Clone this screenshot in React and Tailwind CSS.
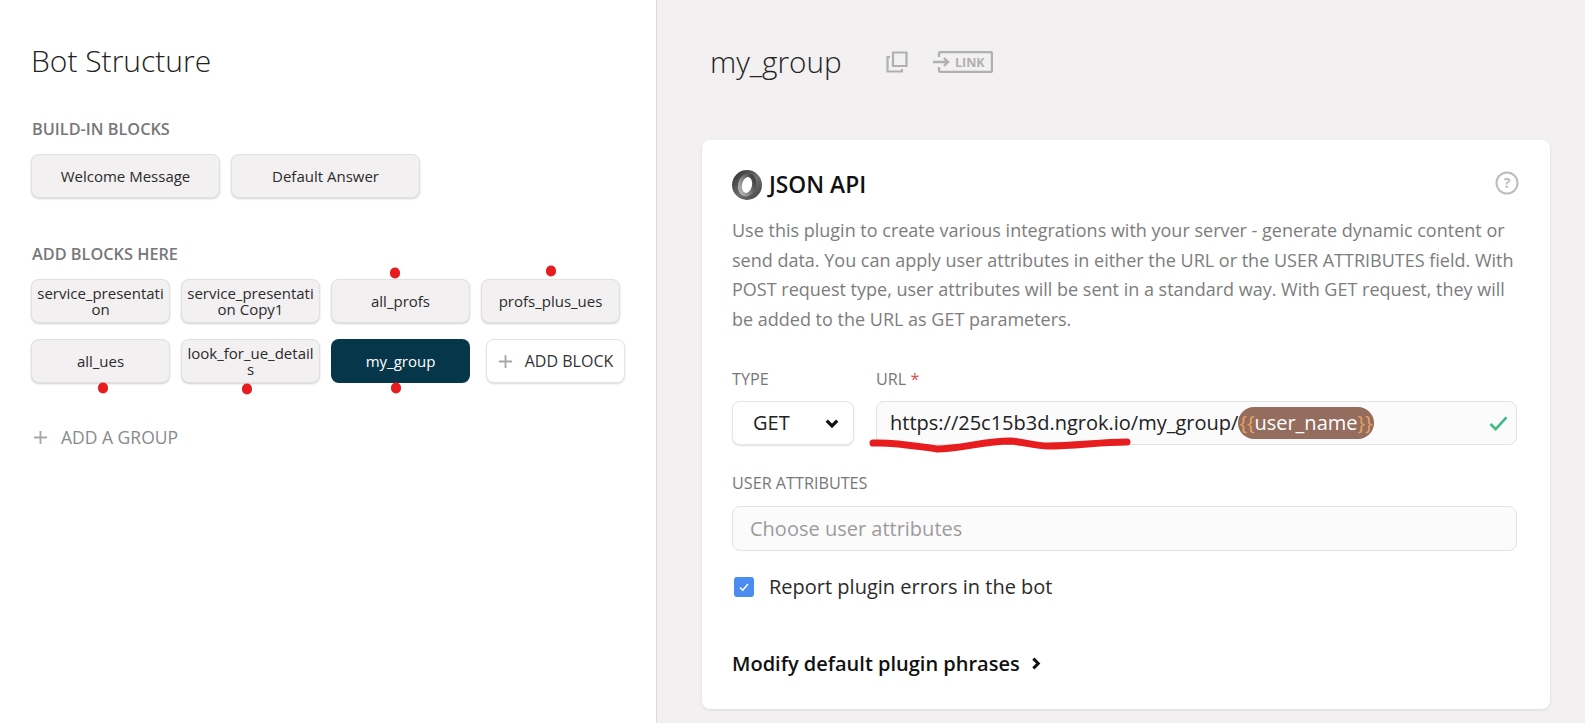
const FONT = "font-['Open_Sans',sans-serif]";

const BUILT_IN = ["Welcome Message", "Default Answer"];
const ROW_ONE = ["service_presentation", "service_presentation Copy1", "all_profs", "profs_plus_ues"];
const ROW_TWO = ["all_ues", "look_for_ue_details"];

// red marks somebody drew on the screenshot
const DOTS = [
  [395, 273],
  [551, 271],
  [103, 388],
  [247, 389],
  [396, 388],
];

function BlockButton({ label, wide, active }) {
  return (
    <div
      className={
        (wide ? "w-[189px] " : "w-[139px] ") +
        (active
          ? "bg-[#05364a] text-white "
          : "bg-[#f2f0f1] text-[#2b2b2b] border border-[#e2e0e1] shadow-[0_1px_2px_rgba(0,0,0,0.18)] ") +
        "h-11 rounded-lg flex items-center justify-center text-center px-[5px] text-[15px] leading-[16px] break-all"
      }
    >
      {label}
    </div>
  );
}

function Plus({ className }) {
  return (
    <svg viewBox="0 0 16 16" className={className} fill="none" stroke="#a8a8a8" strokeWidth="2">
      <path d="M8 1v14M1 8h14" />
    </svg>
  );
}

function JsonLogo() {
  return (
    <svg viewBox="0 0 30 30" className="w-[30px] h-[30px] shrink-0">
      <defs>
        <linearGradient id="ringA" x1="0" y1="0" x2="1" y2="1">
          <stop offset="0" stopColor="#2c2c2c" />
          <stop offset="0.55" stopColor="#6f6f6f" />
          <stop offset="1" stopColor="#3d3d3d" />
        </linearGradient>
        <linearGradient id="ringB" x1="1" y1="0" x2="0" y2="1">
          <stop offset="0" stopColor="#1f1f1f" />
          <stop offset="1" stopColor="#d2d2d2" />
        </linearGradient>
      </defs>
      <circle cx="15" cy="15" r="15" fill="url(#ringA)" />
      <ellipse cx="15" cy="15" rx="9" ry="11.5" transform="rotate(12 15 15)" fill="url(#ringB)" />
      <ellipse cx="15" cy="15" rx="5" ry="8" transform="rotate(12 15 15)" fill="#fff" />
    </svg>
  );
}

function Chevron({ className, strokeWidth = 2.8 }) {
  return (
    <svg viewBox="0 0 12 12" className={className} fill="none" stroke="#111" strokeWidth={strokeWidth}>
      <path d="M1.5 4 6 8.5 10.5 4" />
    </svg>
  );
}

export default function App() {
  return (
    <div className={FONT + " relative flex h-[723px] w-[1585px] overflow-hidden bg-white"}>
      <aside className="w-[657px] shrink-0 border-r border-[#dcdadb] pl-[31px]">
        <h1 className="mt-[41px] text-[30px] leading-[40px] font-light text-[#222]">Bot Structure</h1>
        <h2 className="mt-[38px] pl-px text-[16.3px] leading-[20px] font-semibold text-[#77777a]">BUILD-IN BLOCKS</h2>
        <div className="mt-[15px] flex gap-[11px]">
          {BUILT_IN.map((b) => (
            <BlockButton key={b} label={b} wide />
          ))}
        </div>
        <h2 className="mt-[46px] pl-px text-[16.3px] leading-[20px] font-semibold text-[#77777a]">ADD BLOCKS HERE</h2>
        <div className="mt-[15px] flex gap-[11px]">
          {ROW_ONE.map((b) => (
            <BlockButton key={b} label={b} />
          ))}
        </div>
        <div className="mt-[16px] flex gap-[11px]">
          {ROW_TWO.map((b) => (
            <BlockButton key={b} label={b} />
          ))}
          <BlockButton label="my_group" active />
          <div className="ml-[5px] flex h-11 w-[139px] items-center justify-center gap-[12px] rounded-lg border border-[#e6e6e6] bg-white text-[16px] text-[#333] shadow-[0_1px_2px_rgba(0,0,0,0.15)]">
            <Plus className="w-[15px] h-[15px]" />
            ADD BLOCK
          </div>
        </div>
        <div className="mt-[43px] flex items-center gap-[13px] pl-[2px] text-[17.5px] leading-[22px] text-[#8a8a8a]">
          <Plus className="w-[15px] h-[15px]" />
          ADD A GROUP
        </div>
      </aside>

      <main className="flex-1 bg-[#f2f0f1] pl-[45px] pr-[35px]">
        <div className="mt-[42px] ml-[8px] flex h-10 items-center">
          <span className="w-[176px] text-[29.7px] font-light text-[#222]">my_group</span>
          <svg viewBox="0 0 22 22" className="w-[22px] h-[22px]" fill="none" stroke="#b0b0b0" strokeWidth="2.2">
            <path d="M7 1.5h13.5v13.5H7z" />
            <path d="M4 6H1.5v14.5H16V18" />
          </svg>
          <svg viewBox="0 0 60 22" className="ml-[25px] w-[60px] h-[22px]" fill="none" stroke="#b0b0b0" strokeWidth="2.4">
            <path d="M6 6V3a2 2 0 0 1 2-2h49a2 2 0 0 1 2 2v16a2 2 0 0 1-2 2H8a2 2 0 0 1-2-2v-3" />
            <path d="M0 11h15M11 7l4 4-4 4" />
            <text x="22" y="16" fontSize="12.5" fontWeight="700" fill="#b0b0b0" stroke="none" fontFamily="Open Sans">LINK</text>
          </svg>
        </div>

        <section className="mt-[58px] h-[569px] rounded-lg bg-white pl-[30px] pr-[33px] shadow-[0_1px_3px_rgba(0,0,0,0.1)]">
          <div className="flex items-start pt-[30px]">
            <JsonLogo />
            <span className="ml-[7px] text-[22.8px] leading-[30px] font-[550] text-[#111]">JSON API</span>
            <svg viewBox="0 0 24 24" className="ml-auto mt-[1px] mr-[-2px] w-[24px] h-[24px]" fill="none">
              <circle cx="12" cy="12" r="10.5" stroke="#bdbdbd" strokeWidth="2" />
              <text x="12" y="17" textAnchor="middle" fontSize="14" fontWeight="700" fill="#bdbdbd" fontFamily="Open Sans">?</text>
            </svg>
          </div>
          <p className="mt-[16px] text-[18px] leading-[29.7px] text-[#7d7d7d]">
            Use this plugin to create various integrations with your server - generate dynamic content or send data.
            You can apply user attributes in either the URL or the USER ATTRIBUTES field. With POST request type, user
            attributes will be sent in a standard way. With GET request, they will be added to the URL as GET
            parameters.
          </p>

          <div className="mt-[34px] flex gap-[22px]">
            <div>
              <div className="text-[16.2px] leading-[20px] text-[#77777a]">TYPE</div>
              <div className="mt-[12px] flex h-11 w-[122px] items-center justify-between rounded-lg border border-[#e6e6e6] bg-white pt-px pl-[20px] pr-[14px] text-[20px] text-[#222] shadow-[0_1px_2px_rgba(0,0,0,0.12)]">
                GET
                <Chevron className="w-[14px] h-[14px]" />
              </div>
            </div>
            <div className="flex-1">
              <div className="text-[16.2px] leading-[20px] text-[#77777a]">
                URL <span className="text-[#d9534f]">*</span>
              </div>
              <div className="mt-[12px] flex h-11 items-center rounded-lg border border-[#e3e3e3] bg-[#fbfbfb] pt-px pl-[13px] pr-[8px] text-[20px] text-[#222]">
                https://25c15b3d.ngrok.io/my_group/
                <span className="flex h-8 items-center rounded-2xl bg-[#946d5e] px-px text-white">
                  <span className="text-[#e8a15d]">{"{{"}</span>user_name<span className="text-[#e8a15d]">{"}}"}</span>
                </span>
                <svg viewBox="0 0 20 16" className="ml-auto w-[19px] h-[15px]" fill="none" stroke="#3dbd82" strokeWidth="2.8">
                  <path d="M1.5 8.5 7 14 18.5 1.5" />
                </svg>
              </div>
            </div>
          </div>

          <div className="mt-[28px] text-[16.2px] leading-[20px] text-[#77777a]">USER ATTRIBUTES</div>
          <div className="mt-[13px] flex h-[45px] items-center rounded-lg border border-[#e3e3e3] bg-[#fbfbfb] pt-px pl-[17px] text-[20px] text-[#9c9c9c]">
            Choose user attributes
          </div>

          <div className="mt-[24px] flex items-center pl-[2px]">
            <div className="flex h-5 w-5 items-center justify-center rounded-[3px] bg-[#4a8cf0]">
              <svg viewBox="0 0 12 12" className="w-3 h-3" fill="none" stroke="#fff" strokeWidth="1.6">
                <path d="M2 6.5 4.8 9.2 10 3" />
              </svg>
            </div>
            <span className="ml-[15px] text-[20px] leading-6 text-[#2b2b2b]">Report plugin errors in the bot</span>
          </div>

          <div className="mt-[53px] flex items-center gap-[9px] text-[20px] leading-6 font-semibold text-[#111]">
            Modify default plugin phrases
            <Chevron className="w-[13px] h-[13px] -rotate-90" />
          </div>
        </section>
      </main>

      {DOTS.map(([x, y]) => (
        <span
          key={x + "-" + y}
          className="absolute h-[11px] w-[10px] -translate-x-1/2 -translate-y-1/2 rounded-full bg-[#e61c1f]"
          style={{ left: x, top: y }}
        />
      ))}
      <svg className="absolute left-0 top-0 pointer-events-none" width="1585" height="723" fill="none">
        <path
          d="M873 443 C 895 442, 915 446, 937 449 C 960 449, 985 441, 1010 441 C 1025 442, 1035 446, 1048 446 C 1075 446, 1100 442, 1127 442"
          stroke="#e61c1f"
          strokeWidth="7"
          strokeLinecap="round"
        />
      </svg>
    </div>
  );
}
